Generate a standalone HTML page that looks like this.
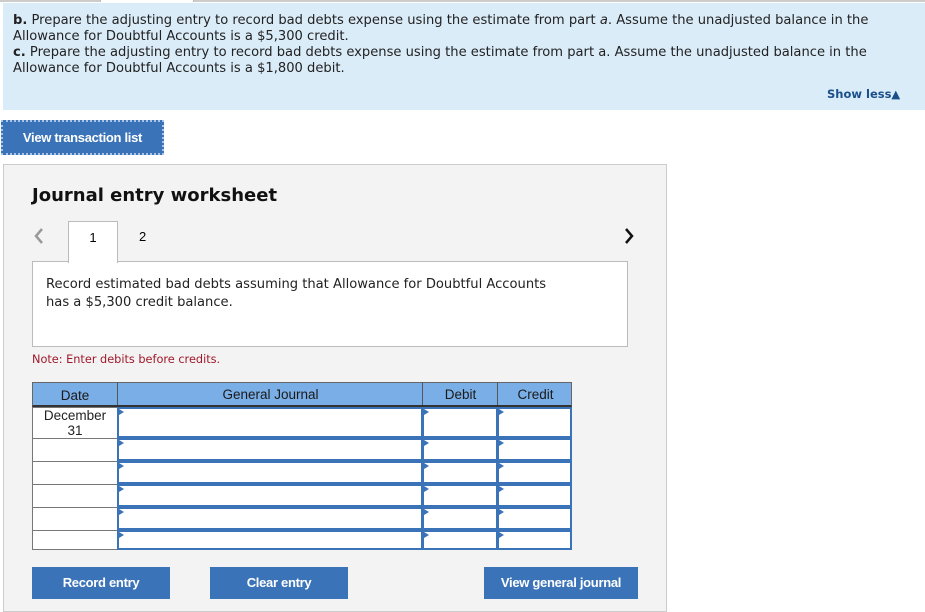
<!DOCTYPE html><html><head><style>
body{margin:0;width:925px;height:610px;background:#fff;position:relative;overflow:hidden;font-family:"DejaVu Sans",Verdana,sans-serif;}
.a{position:absolute}
.btn{position:absolute;background:#3a73b8;color:#fff;font-family:"Liberation Sans",Arial,sans-serif;font-weight:bold;font-size:13px;text-align:center;letter-spacing:-0.3px}
.c{position:absolute;box-sizing:border-box;background:#fff}
.in{border:2px solid #3a73b8}
.in:before{content:"";position:absolute;left:0;top:0;border-left:5px solid #3a73b8;border-top:3px solid transparent;border-bottom:3px solid transparent}
</style></head><body>
<div class="a" style="left:0;top:0;width:100px;height:2px;border-right:1px solid #bbb;background:#ccc"></div>
<div class="a" style="left:193px;top:0;width:732px;height:2px;border-left:1px solid #bbb;background:#ccc"></div>
<div class="a" style="left:3px;top:3px;width:922px;height:107px;background:#dbecf9"></div>
<div class="a" style="left:13px;top:13px;font-size:13.1px;line-height:16px;color:#222;width:910px;white-space:nowrap">
<b>b.</b> Prepare the adjusting entry to record bad debts expense using the estimate from part <i>a</i>. Assume the unadjusted balance in the<br>Allowance for Doubtful Accounts is a $5,300 credit.<br><b>c.</b> Prepare the adjusting entry to record bad debts expense using the estimate from part a. Assume the unadjusted balance in the<br>Allowance for Doubtful Accounts is a $1,800 debit.</div>
<div class="a" style="left:827px;top:87px;font-size:11.5px;font-weight:bold;color:#1a4f8a">Show less▲</div>
<div class="btn" style="left:1px;top:120px;width:159px;height:31px;line-height:31px;border:2px dotted #a9c4e6;">View transaction list</div>
<div class="a" style="left:3px;top:164px;width:662px;height:446px;background:#f3f3f3;border:1px solid #ccc"></div>
<div class="a" style="left:32px;top:185px;font-size:18px;font-weight:bold;color:#111">Journal entry worksheet</div>
<svg class="a" style="left:33px;top:227px" width="12" height="18"><path d="M9 2 L3 9 L9 16" stroke="#999" stroke-width="2.5" fill="none"/></svg>
<svg class="a" style="left:623px;top:227px" width="12" height="18"><path d="M3 2 L9 9 L3 16" stroke="#111" stroke-width="2.5" fill="none"/></svg>
<div class="c" style="left:32px;top:261px;width:596px;height:86px;border:1px solid #bbb"></div>
<div class="c" style="left:68px;top:221px;width:50px;height:42px;border:1px solid #bbb;border-bottom:none;text-align:center;line-height:32px;font-size:13px;font-family:'Liberation Sans'">1</div>
<div class="a" style="left:139px;top:229px;font-size:13px;font-family:'Liberation Sans'">2</div>
<div class="a" style="left:46px;top:276px;font-size:13.1px;line-height:18px;color:#222;white-space:nowrap">Record estimated bad debts assuming that Allowance for Doubtful Accounts<br>has a $5,300 credit balance.</div>
<div class="a" style="left:32px;top:353px;font-size:11.3px;color:#a0182a">Note: Enter debits before credits.</div>
<div class="a" style="left:32px;top:382px;width:540px;height:25px;background:#7aaee6;box-sizing:border-box;border:1px solid #666;border-bottom:2px solid #333;font-family:'Liberation Sans';font-size:13.5px;color:#1a1a1a">
<div class="a" style="left:0;width:84px;text-align:center;top:5px">Date</div>
<div class="a" style="left:84px;width:305px;text-align:center;border-left:1px solid #555;height:23px;top:-1px;line-height:25px">General Journal</div>
<div class="a" style="left:389px;width:75px;text-align:center;border-left:1px solid #555;height:23px;top:-1px;line-height:25px">Debit</div>
<div class="a" style="left:464px;width:75px;text-align:center;border-left:1px solid #555;height:23px;top:-1px;line-height:25px">Credit</div>
</div>
<div class="a" style="left:32px;top:407px;width:540px;height:143px;background:#fff;border:1px solid #777;box-sizing:border-box"></div>
<div class="a" style="left:33px;top:408px;width:84px;text-align:center;font-family:'Liberation Sans';font-size:13.5px;line-height:15px;color:#222">December<br>31</div>
<div id="rows"></div>
<script>
var ys=[[407,31],[438,23],[461,23],[484,23],[507,23],[530,20]],h='';
ys.forEach(function(r,i){
if(i>0)h+='<div class="a" style="left:32px;top:'+r[0]+'px;width:86px;height:1px;background:#777"></div>';
[[117,306],[422,76],[497,75]].forEach(function(c){h+='<div class="c in" style="left:'+c[0]+'px;top:'+r[0]+'px;width:'+c[1]+'px;height:'+r[1]+'px"></div>';});
});
document.getElementById('rows').innerHTML=h;
</script>
<div class="btn" style="left:32px;top:567px;width:138px;height:32px;line-height:32px">Record entry</div>
<div class="btn" style="left:210px;top:567px;width:138px;height:32px;line-height:32px">Clear entry</div>
<div class="btn" style="left:484px;top:567px;width:154px;height:32px;line-height:32px">View general journal</div>
</body></html>
